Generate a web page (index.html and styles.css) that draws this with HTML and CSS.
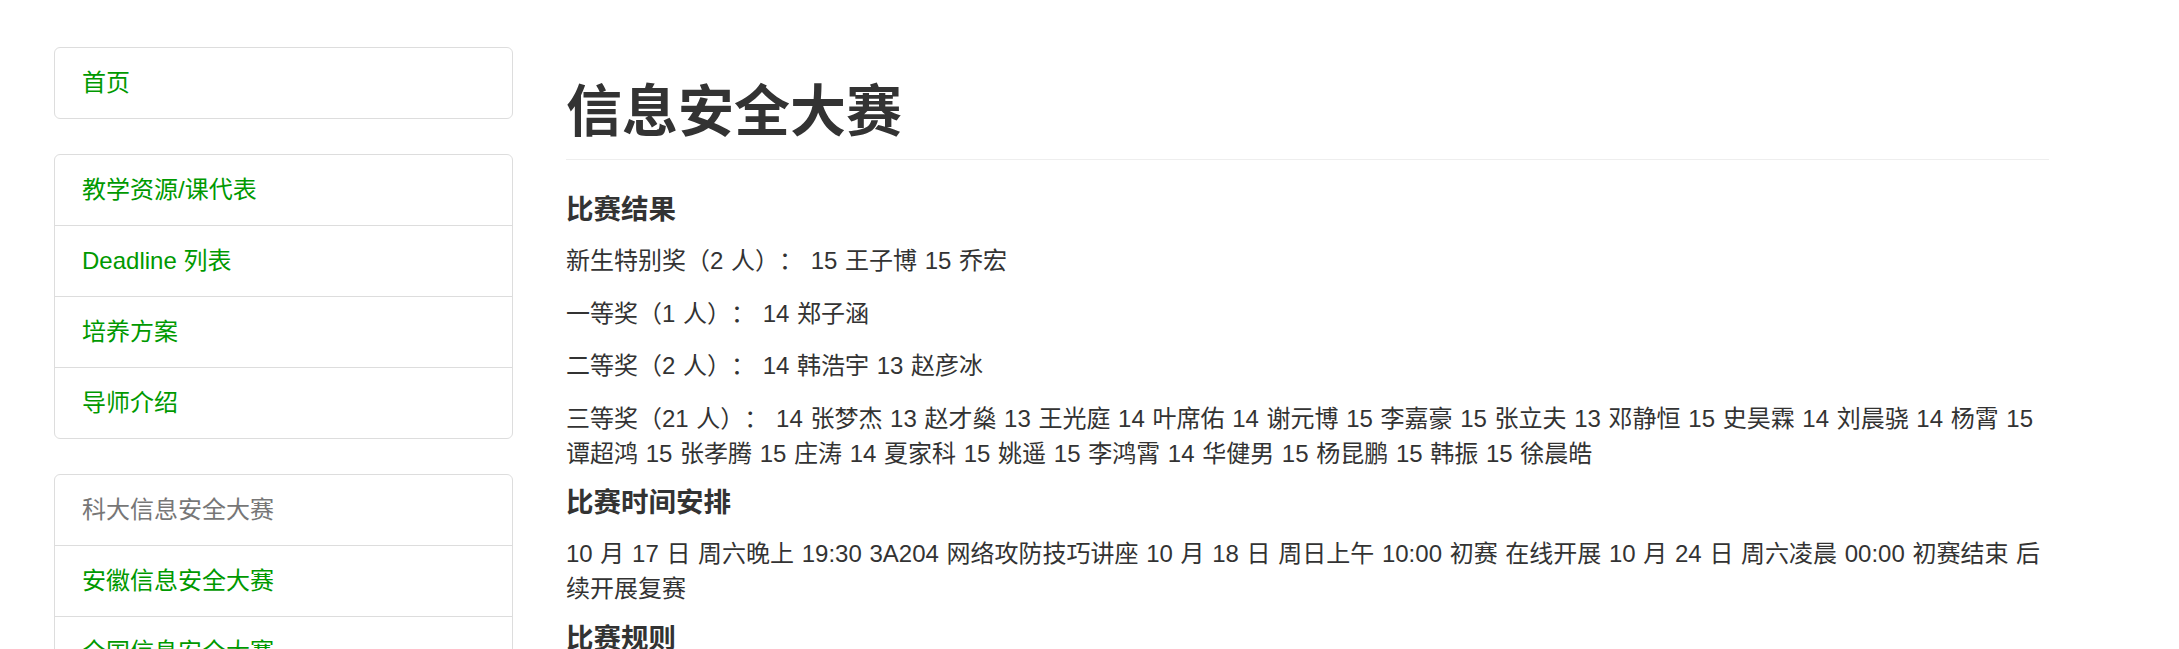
FILE: index.html
```html
<!DOCTYPE html>
<html lang="zh-CN">
<head>
<meta charset="utf-8">
<title>信息安全大赛</title>
<link rel="stylesheet" href="styles.css">
</head>
<body>
<div class="page">
  <aside class="sidebar">
    <ul class="list-group">
      <li class="list-item"><a href="#">首页</a></li>
    </ul>
    <ul class="list-group">
      <li class="list-item"><a href="#">教学资源/课代表</a></li>
      <li class="list-item"><a href="#">Deadline 列表</a></li>
      <li class="list-item"><a href="#">培养方案</a></li>
      <li class="list-item"><a href="#">导师介绍</a></li>
    </ul>
    <ul class="list-group">
      <li class="list-item current"><span>科大信息安全大赛</span></li>
      <li class="list-item"><a href="#">安徽信息安全大赛</a></li>
      <li class="list-item"><a href="#">全国信息安全大赛</a></li>
    </ul>
  </aside>
  <main class="content">
    <h1 class="page-header">信息安全大赛</h1>
    <h4 class="section-title">比赛结果</h4>
    <p class="text">新生特别奖（2 人）： 15 王子博 15 乔宏</p>
    <p class="text">一等奖（1 人）： 14 郑子涵</p>
    <p class="text">二等奖（2 人）： 14 韩浩宇 13 赵彦冰</p>
    <p class="text">三等奖（21 人）： 14 张梦杰 13 赵才燊 13 王光庭 14 叶席佑 14 谢元博 15 李嘉豪 15 张立夫 13 邓静恒 15 史昊霖 14 刘晨骁 14 杨霄 15 谭超鸿 15 张孝腾 15 庄涛 14 夏家科 15 姚遥 15 李鸿霄 14 华健男 15 杨昆鹏 15 韩振 15 徐晨皓</p>
    <h4 class="section-title">比赛时间安排</h4>
    <p class="text">10 月 17 日 周六晚上 19:30 3A204 网络攻防技巧讲座 10 月 18 日 周日上午 10:00 初赛 在线开展 10 月 24 日 周六凌晨 00:00 初赛结束 后续开展复赛</p>
    <h4 class="section-title">比赛规则</h4>
  </main>
</div>
</body>
</html>
```

FILE: styles.css
```css
html, body {
  margin: 0;
  padding: 0;
  background: #fff;
}

body {
  font-family: "Liberation Sans", "Noto Sans CJK SC", sans-serif;
  font-size: 24px;
  color: #333;
  text-spacing-trim: space-all;
}

.page {
  display: flex;
  align-items: flex-start;
  gap: 53px;
  padding: 47px 0 0 54px;
}

.sidebar {
  width: 459px;
  flex: none;
  display: flex;
  flex-direction: column;
  gap: 35px;
}

.list-group {
  list-style: none;
  margin: 0;
  padding: 0;
  border: 1px solid #ddd;
  border-radius: 6px;
}

.list-item {
  padding: 18px 27px;
  line-height: 34px;
  border-top: 1px solid #ddd;
}

.list-item:first-child {
  border-top: none;
}

.list-item a {
  color: #009900;
  text-decoration: none;
}

.list-item.current span {
  color: #777;
}

.content {
  width: 1483px;
  flex: none;
  padding-top: 35px;
}

.page-header {
  margin: 0 0 35px;
  padding: 0 0 17px;
  font-size: 56px;
  line-height: 60px;
  font-weight: bold;
  border-bottom: 1px solid #eee;
}

.section-title {
  margin: 15px 0 18px;
  font-size: 27.5px;
  line-height: 30px;
  font-weight: bold;
}

.text {
  margin: 0 0 17.5px;
  line-height: 35px;
  word-spacing: 1px;
}
```
